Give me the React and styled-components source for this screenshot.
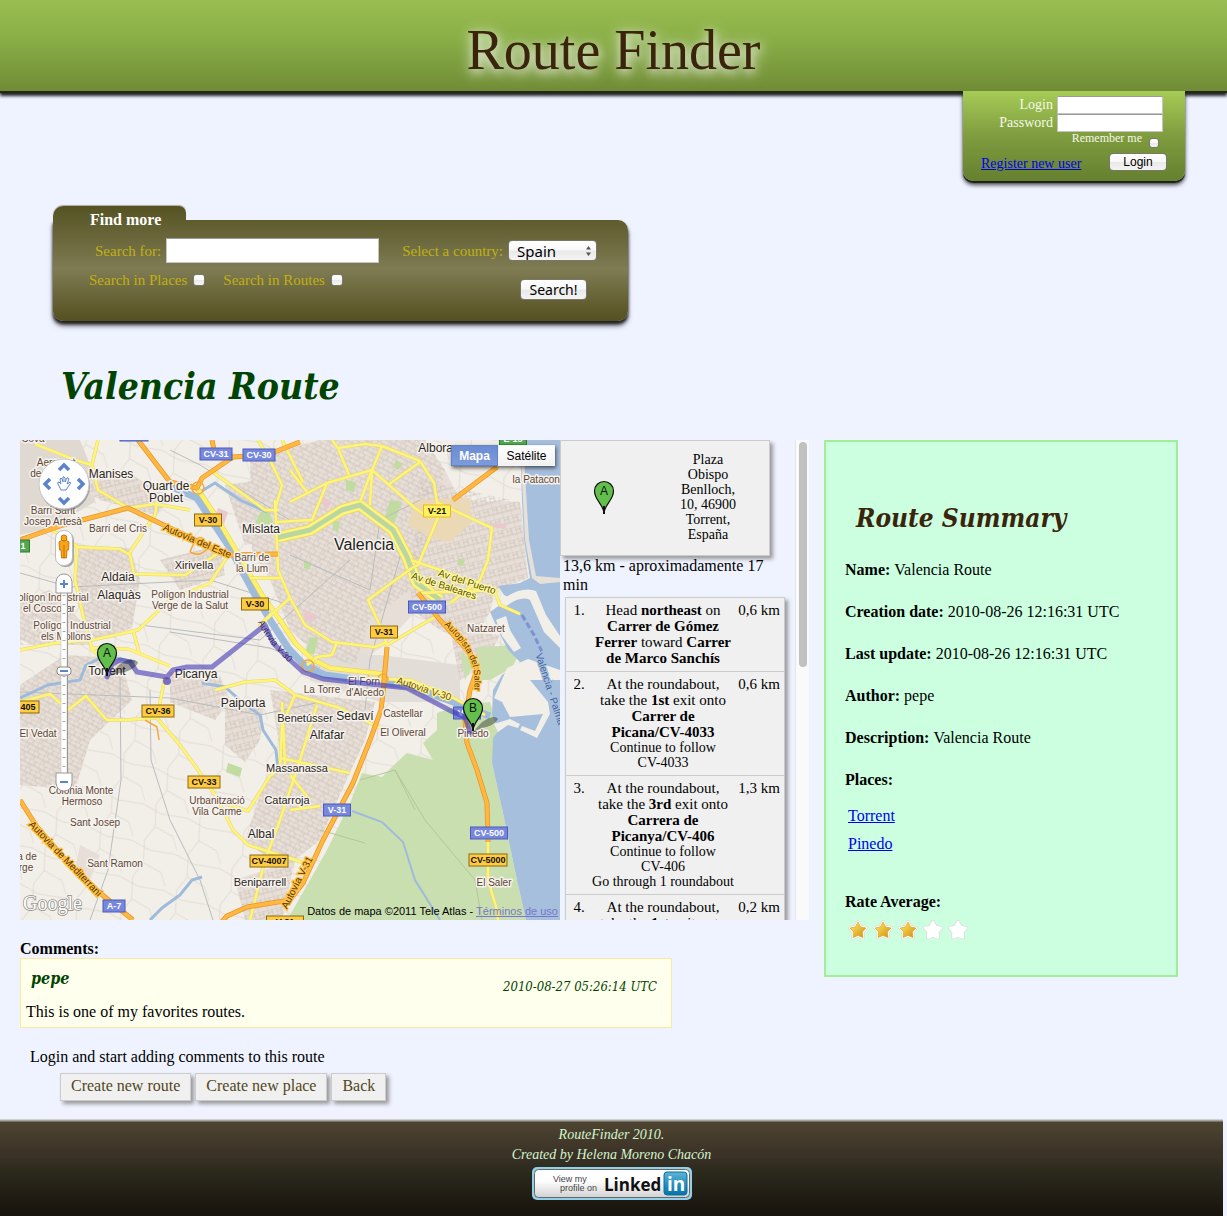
import React, { useId } from "react";
import styled, { createGlobalStyle, css } from "styled-components";

const serif = `"Liberation Serif", "Times New Roman", serif`;
const display = `"DejaVu Serif Condensed", "DejaVu Serif", Georgia, serif`;
const sans = `"Liberation Sans", Arial, sans-serif`;
const ui = `"Noto Sans", "Open Sans", sans-serif`;

const GlobalStyle = createGlobalStyle`
  *, *::before, *::after { box-sizing: border-box; }
  body {
    margin: 0;
    background: #eff3ff;
    color: #000;
    font: 16px/18px ${serif};
  }
  h1, h2, h3, h4, p, ul, ol, dl, dd { margin: 0; padding: 0; }
  ul, ol { list-style: none; }
  a { color: #0000ee; }
`;

/* ---------- header ---------- */

const Header = styled.header`
  height: 91px;
  padding-top: 18px;
  text-align: center;
  background: linear-gradient(#99bd50, #8bb047 40%, #6f8c35);
  box-shadow: 0 2px 1px #22271c, 0 5px 3px rgba(0, 0, 0, 0.85);
`;

const SiteTitle = styled.h1`
  font-size: 56px;
  font-weight: normal;
  line-height: 64px;
  color: #3a250c;
  text-shadow: 1px 3px 8px rgba(255, 255, 255, 0.6), 1px 3px 16px rgba(255, 255, 255, 0.9);
`;

const glossy = css`
  border: 1px solid #77776a;
  border-radius: 4px;
  background: linear-gradient(#fff, #f8f8f8 49%, #e9e9e9 51%, #f4f4f4);
  color: #000;
`;

const TickBox = styled.input`
  appearance: none;
  ${glossy}
  width: ${(p) => p.$size}px;
  height: ${(p) => p.$size}px;
  margin: 0;
  border-radius: 3px;
  &:checked { background: #5b86d8; }
`;

const TextBox = styled.input`
  width: ${(p) => p.$width}px;
  height: ${(p) => p.$height}px;
  margin: 0;
  padding: 1px 4px;
  border: 1px solid #c4c4c4;
  border-top-color: #999;
  border-radius: 0;
  background: #fff;
  font: 14px ${ui};
`;

const PushButton = styled.button`
  ${glossy}
  width: ${(p) => p.$width}px;
  height: ${(p) => p.$height}px;
  padding: 0;
  font: ${(p) => p.$font};
`;

const LoginBar = styled.div`
  display: flex;
  justify-content: flex-end;
  padding-right: 42px;
  position: relative;
`;

const LoginPanel = styled.form`
  width: 222px;
  height: 90px;
  padding: 5px 18px 0;
  border-radius: 0 0 10px 10px;
  background: linear-gradient(#a6cb56, #7f9c3f 50%, #65802f);
  box-shadow: 0 2px 1px #1c2114, 0 4px 4px rgba(0, 0, 0, 0.7);
  color: #f4f8e8;
  font-size: 14px;
`;

const LoginRow = styled.div`
  display: flex;
  justify-content: flex-end;
  align-items: center;
  gap: 4px;
  padding-right: 4px;
`;

const RememberRow = styled.div`
  display: flex;
  justify-content: flex-end;
  align-items: flex-end;
  gap: 7px;
  height: 16px;
  padding-right: 8px;
  font-size: 12px;
  label { align-self: flex-start; line-height: 12px; }
`;

const LoginActions = styled.div`
  display: flex;
  justify-content: space-between;
  align-items: flex-start;
  margin-top: 5px;
  a { line-height: 22px; }
`;

/* ---------- search ---------- */

const SearchForm = styled.form`
  max-width: 575px;
  margin: 25px 20px 0 53px;
`;

const olive = `linear-gradient(#555222, #7f7b53 55%, #545020)`;

const SearchTab = styled.h2`
  width: 133px;
  height: 14px;
  padding-left: 37px;
  border-radius: 10px 7px 0 0;
  background: ${olive} 0 0 / 100% 115px no-repeat;
  box-shadow: 0 -1px 1px #aaa;
  color: #fff;
  font-size: 16px;
  line-height: 28px;
`;

const SearchPanel = styled.div`
  padding: 18px 31px 21px 36px;
  border-radius: 0 10px 10px 10px;
  background: ${olive} 0 -14px / 100% 115px no-repeat;
  box-shadow: 0 3px 3px #222, 0 5px 5px rgba(0, 0, 0, 0.5);
  color: #c1b011;
  font-size: 15px;
`;

const SearchRow = styled.div`
  display: flex;
  align-items: center;
  gap: 5px;
  padding-left: 6px;
`;

const CountryLabel = styled.label`
  margin-left: auto;
`;

const SelectShell = styled.span`
  position: relative;
  display: block;
  svg { position: absolute; right: 5px; top: 5px; pointer-events: none; }
`;

const Select = styled.select`
  appearance: none;
  ${glossy}
  display: block;
  width: 89px;
  height: 21px;
  padding: 0 8px;
  font: 15px/18px ${ui};
`;

const OptionsRow = styled.div`
  display: flex;
  align-items: flex-start;
  gap: 18px;
  margin-top: 8px;
  padding-right: 10px;
  button { margin: 8px 0 0 auto; }
`;

const Option = styled.label`
  display: flex;
  align-items: center;
  gap: 6px;
`;

/* ---------- main ---------- */

const RouteTitle = styled.h2`
  margin: 44px 20px 33px 61px;
  font: italic bold 37px/42px ${display};
  color: #004400;
`;

const Main = styled.main`
  display: flex;
  align-items: flex-start;
  gap: 15px;
  padding: 0 49px 21px 20px;
`;

const Column = styled.div`
  flex: 1;
  min-width: 0;
`;

const RouteView = styled.section`
  display: flex;
  height: 480px;
`;

const MapFrame = styled.div`
  position: relative;
  flex: 1;
  min-width: 0;
  overflow: hidden;
  font-family: ${sans};
`;

const MapArt = styled.svg`
  display: block;
  width: 100%;
  height: 480px;
  font-family: ${sans};
`;

const MapTypes = styled.div`
  position: absolute;
  top: 5px;
  right: 5px;
  display: flex;
  box-shadow: 1px 2px 4px rgba(0, 0, 0, 0.6);
`;

const MapType = styled.button`
  width: ${(p) => (p.$on ? 47 : 57)}px;
  height: 21px;
  padding: 0;
  border: 1px solid ${(p) => (p.$on ? "#6283cc" : "#f4f4f4")};
  background: ${(p) => (p.$on ? "linear-gradient(#6a8cd2, #7e9bdb)" : "linear-gradient(#fff, #f1f1f1)")};
  color: ${(p) => (p.$on ? "#fff" : "#000")};
  font: ${(p) => (p.$on ? "bold" : "normal")} 12px ${sans};
`;

const MapCredit = styled.p`
  position: absolute;
  right: 2px;
  bottom: 1px;
  font-size: 11px;
  line-height: 16px;
  a { color: #7777cc; }
`;

const Directions = styled.div`
  flex: 0 0 235px;
  overflow: hidden;
`;

const ScrollTrack = styled.div`
  flex: 0 0 14px;
  padding: 2px 2px 0 3px;
  border-left: 1px solid #e6e6e6;
  background: #fafafa;
`;

const ScrollThumb = styled.div`
  height: 225px;
  border-radius: 4px;
  background: #c1c1c1;
`;

const raised = css`
  border: 1px solid #cbcbcb;
  background: #f0f0f0;
  box-shadow: 3px 3px 4px #999;
`;

const Address = styled.div`
  ${raised}
  display: flex;
  align-items: center;
  width: 210px;
  height: 116px;
  padding: 0 30px 2px 32px;
  justify-content: space-between;
  font-size: 14px;
  line-height: 15px;
  text-align: center;
  p { width: 62px; }
`;

const Distance = styled.p`
  width: 220px;
  padding-left: 3px;
  line-height: 19px;
`;

const Steps = styled.table`
  ${raised}
  width: 220px;
  margin: 3px 0 0 5px;
  border-collapse: separate;
  border-spacing: 0;
  table-layout: fixed;
  font-size: 15px;
  line-height: 16px;
  td {
    padding: 4px 0 5px;
    border-bottom: 1px solid #cbcbcb;
    vertical-align: top;
    text-align: center;
  }
  td:first-child { width: 26px; }
  td:last-child { width: 50px; }
`;

const StepText = styled.div`
  padding: 0 2px;
`;

const StepNote = styled.div`
  font-size: 14px;
  line-height: 15px;
`;

const Whole = styled.span`
  white-space: nowrap;
`;

/* ---------- comments ---------- */

const CommentsTitle = styled.h3`
  margin-top: 20px;
  font-size: 16px;
`;

const Comment = styled.article`
  max-width: 652px;
  border: 1px solid #fbe9a0;
  background: #ffffee;
  padding: 0 14px 6px 5px;
`;

const CommentHead = styled.div`
  display: flex;
  justify-content: space-between;
  align-items: flex-end;
  height: 38px;
  margin-bottom: 6px;
  padding-left: 5px;
  color: #004400;
`;

const Author = styled.h4`
  margin-bottom: 8px;
  font: italic bold 16px/20px ${display};
`;

const Stamp = styled.time`
  font: italic 13px/20px ${display};
`;

const Hint = styled.p`
  margin-top: 20px;
  padding-left: 10px;
`;

const Actions = styled.nav`
  display: flex;
  gap: 4px;
  margin: 7px 0 0 40px;
`;

const Action = styled.a`
  ${raised}
  height: 28px;
  padding: 3px 10px;
  color: #514721;
  text-decoration: none;
`;

/* ---------- summary ---------- */

const Summary = styled.aside`
  flex: 0 0 354px;
  height: 537px;
  padding: 60px 19px 0;
  border: 2px solid #a0ee98;
  background: #ccffe0;
`;

const SummaryTitle = styled.h3`
  margin: 0 0 27px 11px;
  font: italic bold 26px/32px ${display};
  color: #3a250c;
`;

const Facts = styled.dl`
  display: grid;
  gap: 24px;
  div { display: flex; gap: 4px; }
  dt { font-weight: bold; }
`;

const Places = styled.ul`
  margin: 13px 0 35px;
  padding-left: 3px;
  line-height: 28px;
`;

const Stars = styled.div`
  display: flex;
  gap: 5px;
  padding: 9px 3px 0;
`;

/* ---------- footer ---------- */

const Footer = styled.footer`
  height: 94px;
  margin-right: 4px;
  padding-top: 3px;
  background: linear-gradient(#4d4431, #393026 38%, #2c291d 52%, #17130d);
  box-shadow: 0 -1px 0 #77746a, 0 -2px 0 #a5a39c, 0 -3px 0 #d0d0cf;
  color: #d5f5ce;
  text-align: center;
  font: italic 14px/20px ${serif};
`;

const Badge = styled.a`
  display: inline-block;
  margin-top: 2px;
  svg { display: block; }
`;

/* ---------- map data ---------- */

const streets = {
  yellow: [
    "M15,4 L55,20 L72,25 L78,50 L108,68 L135,64 L170,70",
    "M72,25 L78,0",
    "M0,210 L35,203 L72,200 L118,190 L150,160 L190,143 L207,117",
    "M57,107 L100,109 L110,115 L114,134 L165,135 L200,112",
    "M57,107 L55,140 L63,175 L72,210 L87,222",
    "M32,90 L58,107",
    "M72,208 L108,209 L150,226",
    "M113,190 L119,212",
    "M108,115 L135,75 L137,62",
    "M145,237 L137,278 L105,280 L87,280 L78,270 L66,256 L48,270",
    "M137,278 L160,305 L178,330 L200,362 L228,371 L250,336 L265,325 L262,262",
    "M200,364 L213,390 L228,405 L275,420",
    "M195,250 L225,242 L255,240 L275,255 L320,268 L360,288",
    "M0,262 L30,254 L48,270",
    "M312,0 L318,8 L345,4 L362,6 L400,21 L414,43 L419,75 L398,125 L392,128",
    "M270,62 L307,43 L352,30 L395,68 L409,78",
    "M318,8 L329,35 M362,6 L352,30 L340,62 M352,30 L350,65",
    "M368,45 L400,22",
    "M270,30 L287,52 M262,0 L283,42",
    "M307,43 L292,80 L255,82",
    "M416,62 L472,88 L468,120 L460,140 L430,163",
    "M392,128 L348,160 L362,190 L367,205 L415,177",
    "M391,120 L420,130 L475,152 L480,165 L500,174",
    "M399,153 L478,150",
    "M270,158 L285,185 L312,202 L355,207 L367,202",
    "M255,60 L258,130 L270,158 L240,185 L252,173",
    "M258,70 L245,70 L190,30",
    "M238,0 L250,20 L262,45 L255,70",
    "M230,138 L260,138",
    "M287,225 L297,217 L312,215 L317,202",
    "M275,255 L262,285 L260,330",
    "M297,265 L280,320 L260,380 L245,420 L230,480",
    "M260,318 L330,333",
    "M270,418 L292,426",
    "M468,400 L468,440 L477,470 L478,480",
    "M270,370 L300,366",
    "M270,335 L282,350 L290,360",
    "M340,238 L390,240 L430,256 L465,275",
  ],
  orange: [
    "M0,100 L43,85 L108,68 L150,88 L207,115 L258,114",
    "M118,0 L150,42 L177,48 L182,38 L213,17 L247,15 L280,2",
    "M192,0 L194,10",
    "M0,360 L17,387 L43,417 L80,453 L113,480",
    "M367,207 L363,253 L361,270 L350,300 L333,343 L303,400 L283,443 L270,460 L227,467 L207,476 L200,484",
    "M398,153 L420,180 L450,213 L457,230 L450,250 L445,280 L447,303 L457,330 L467,363 L468,402",
    "M477,27 L433,60",
  ],
};

const canal = "M150,46 L177,58 L190,78 L210,108 L235,155 L252,183 L268,208 L285,226 L305,235 L363,243 L390,246 L417,256 L470,276";
const turia = "M255,98 L290,90 L322,70 L340,65 L353,75 L373,90 L387,117 L397,143 L420,160";
const route = "M87,237 L92,224 L100,220 L110,222 L117,232 L147,237 L153,230 L167,227 L192,227 L245,185 L253,203 L270,220 L283,232 L303,239 L350,244 L387,248 L433,272 L445,277 L450,292";

const towns = [
  ["Manises", 91, 38], ["Quart de", 146, 50], ["Poblet", 146, 62], ["Mislata", 241, 93],
  ["Xirivella", 174, 129], ["Aldaia", 98, 141], ["Alaquàs", 99, 159], ["Torrent", 87, 235],
  ["Picanya", 176, 238], ["Paiporta", 223, 267], ["Benetússer", 285, 282], ["Sedaví", 335, 280],
  ["Alfafar", 307, 299], ["Massanassa", 277, 332], ["Catarroja", 267, 364], ["Albal", 241, 398],
  ["Beniparrell", 240, 446], ["Alboraya", 422, 12],
];

const suburbs = [
  ["Cova", 13, 2], ["Aeroport", 36, 26], ["de València", 36, 37], ["Barri Sant", 33, 74], ["Josep Artesà", 33, 85],
  ["Barri del Cris", 98, 92], ["Barri de", 232, 121], ["la Llum", 232, 132],
  ["Polígon Industrial", 170, 158], ["Verge de la Salut", 170, 169], ["Polígon Industrial", 30, 161], ["el Coscollar", 29, 172],
  ["Polígon Industrial", 52, 189], ["els Mollons", 46, 200], ["la Patacona", 519, 43], ["Natzaret", 466, 192],
  ["La Torre", 302, 253], ["El Forn", 344, 245], ["d'Alcedo", 345, 256], ["Castellar", 383, 277],
  ["El Oliveral", 383, 296], ["El Vedat", 18, 297], ["Colonia Monte", 61, 354], ["Hermoso", 62, 365],
  ["Sant Josep", 75, 386], ["Sant Ramon", 95, 427], ["Urbanització", 197, 364], ["Vila Carme", 197, 375],
  ["Pinedo", 453, 297], ["El Saler", 474, 446], ["a de", 7, 420], ["rge", 6, 431],
];

const roadNames = [
  ["Autovía del Este", 176, 104, 23, "#5b3400", "#ffc345"],
  ["Autovia de Mediterrani", 43, 421, 46, "#5b3400", "#ffc345"],
  ["Autovía V-31", 280, 444, -63, "#5b3400", "#ffc345"],
  ["Autovia V-30", 403, 252, 18, "#6a5300", "#fff39a"],
  ["Av del Puerto", 446, 145, 18, "#5b5500", "#fff8a0"],
  ["Av de Baleares", 423, 149, 18, "#5b5500", "#fff8a0"],
  ["Valencia - Palma", 527, 250, 72, "#47649f", "#a5bfdd"],
];

const shieldColors = {
  blue: ["#7687dd", "#4b5cb8", "#fff"],
  amber: ["#ffcb40", "#8a6a10", "#111"],
  yellow: ["#fff25c", "#f0b820", "#111"],
  green: ["#52a852", "#2d7a2d", "#fff"],
};

const shields = [
  ["V-30", 114, -5, 28, "blue"], ["CV-31", 196, 14, 32, "blue"], ["CV-30", 239, 15, 32, "blue"],
  ["V-30", 188, 80, 27, "amber"], ["V-30", 235, 164, 27, "amber"], ["V-21", 417, 71, 27, "yellow"],
  ["CV-500", 407, 167, 37, "blue"], ["V-31", 364, 192, 27, "amber"], ["CV-36", 138, 271, 32, "amber"],
  ["405", 8, 267, 22, "amber"], ["CV-33", 184, 342, 32, "amber"], ["CV-4007", 249, 421, 38, "amber"],
  ["V-31", 317, 370, 27, "blue"], ["CV-500", 469, 393, 37, "blue"], ["CV-5000", 468, 420, 38, "amber"],
  ["A-7", 94, 466, 22, "blue"], ["V-15", 447, 273, 27, "blue"], ["E-15", 493, -1, 27, "green"],
  ["1", 3, 106, 13, "green"], ["V-31", 265, 482, 37, "amber"],
];

function Pin({ letter }) {
  return (
    <g>
      <path d="M0,0 C-1,-9 -9.500,-13 -9.500,-22 A9.500,9.500 0 1 1 9.500,-22 C9.500,-13 1,-9 0,0 Z" fill="#63bf4c" stroke="#111" strokeWidth="1.200" />
      <path d="M0,1 L0,-7" stroke="#111" strokeWidth="2" />
      <text y="-18" textAnchor="middle" fontSize="12" fill="#111">{letter}</text>
    </g>
  );
}

function ValenciaMap() {
  return (
    <MapArt viewBox="0 0 540 480" preserveAspectRatio="xMidYMid slice" role="img" aria-label="Valencia Route">
      <defs>
        <pattern id="blocks" width="11" height="9" patternUnits="userSpaceOnUse" patternTransform="rotate(27)">
          <path d="M0,0 H11 M0,0 V9 M6,0 V5 M0,5 H11 M3,5 V9" stroke="#c8bcb3" strokeWidth="0.700" fill="none" />
        </pattern>
        <pattern id="blocksSteep" width="9" height="12" patternUnits="userSpaceOnUse" patternTransform="rotate(-14)">
          <path d="M0,0 H9 M0,0 V12 M5,0 V7 M0,7 H9 M0,3 H5" stroke="#c8bcb3" strokeWidth="0.700" fill="none" />
        </pattern>
        <pattern id="lanes" width="46" height="38" patternUnits="userSpaceOnUse" patternTransform="rotate(18)">
          <path d="M0,4 L20,8 L46,4 M12,0 L18,22 L12,38 M18,22 L38,26 L46,38" stroke="#ddd8cf" strokeWidth="0.800" fill="none" />
        </pattern>
        <path id="saler" d="M424,185 Q450,208 454,232 Q456,250 450,285" />
        <path id="v30" d="M238,182 Q250,208 284,236" />
      </defs>

      <rect width="540" height="480" fill="#f2efe9" />
      <rect width="540" height="480" fill="url(#lanes)" />

      <g fill="#e7dfd7">
        <path d="M0,0 L60,0 L72,30 L75,62 L30,88 L0,95 Z" fill="#e0d9d2" />
        <path d="M230,18 L300,0 L405,0 L425,30 L440,60 L500,62 L508,138 L475,150 L470,172 L450,205 L420,190 L395,172 L365,205 L335,225 L296,214 L270,190 L250,140 L232,110 Z" />
        <path d="M55,105 L110,108 L120,140 L112,188 L75,200 L58,165 Z" />
        <path d="M55,45 L105,30 L150,60 L135,75 L80,60 Z M140,120 L200,105 L205,135 L160,150 Z" />
        <path d="M0,245 L45,215 L100,218 L112,260 L70,300 L55,350 L0,345 Z" />
        <path d="M150,232 L200,236 L210,260 L195,280 L150,262 Z M205,262 L245,258 L240,300 L225,322 L205,305 Z" />
        <path d="M250,250 L355,262 L345,300 L322,350 L300,400 L262,430 L225,400 L245,340 L262,320 Z" />
        <path d="M215,440 L275,420 L262,480 L225,480 Z M60,405 L80,415 L70,440 L55,430 Z M430,190 L480,195 L465,225 L440,240 Z" />
        <path d="M290,215 L360,215 L440,225 L440,262 L360,262 L290,240 Z" fill="#e2ddd6" />
        <path d="M0,160 L30,150 L60,180 L70,205 L20,205 L0,200 Z M205,45 L240,40 L255,100 L225,105 Z" />
      </g>
      <path fill="url(#blocks)" d="M230,18 L300,0 L405,0 L425,30 L415,80 L390,150 L350,180 L335,225 L296,214 L270,190 L250,140 L232,110 Z M55,105 L110,108 L120,140 L112,188 L75,200 L58,165 Z M0,245 L45,215 L100,218 L112,260 L70,300 L55,350 L0,345 Z M250,250 L355,262 L345,300 L322,350 L300,400 L262,430 L225,400 L245,340 L262,320 Z M0,160 L30,150 L60,180 L70,205 L0,205 Z M205,45 L240,40 L255,100 L225,105 Z" />
      <path fill="url(#blocksSteep)" d="M400,40 L500,62 L508,138 L475,150 L470,172 L450,205 L420,190 L395,172 L390,150 Z M55,45 L105,30 L150,60 L135,75 L80,60 Z M140,120 L200,105 L205,135 L160,150 Z M150,232 L200,236 L210,260 L195,280 L150,262 Z M205,262 L245,258 L240,300 L225,322 L205,305 Z M215,440 L275,420 L262,480 L225,480 Z M430,190 L480,195 L465,225 L440,240 Z" />
      <path d="M395,60 L450,58 L452,82 L430,102 L412,98 L388,85 Z" fill="#ead9b4" />
      <g fill="#e9c9cd">
        <path d="M198,68 L208,72 L204,84 L196,78 Z M300,55 L312,62 L305,72 Z M286,170 L297,175 L292,183 L283,178 Z M473,83 L486,84 L485,89 L472,87 Z" />
      </g>

      <path d="M403,303 L413,320 L387,313 L377,322 L362,337 L342,333 L330,363 L307,410 L290,440 L270,475 L270,480 H506 L497,440 L483,373 L472,323 L478,290 L470,262 L440,265 L417,273 L417,290 Z" fill="#cadfb0" />
      <path d="M457,207 L503,205 L492,228 L470,240 L458,240 Z M440,212 L455,222 L445,240 Z" fill="#cadfb0" />
      <g fill="#c1dca0">
        <path d="M245,66 L250,74 L255,88 L243,88 L235,82 Z M326,40 L336,42 L334,52 L326,50 Z M370,60 L382,62 L374,84 L364,80 Z M313,80 L320,82 L318,92 L313,90 Z M284,120 L292,124 L289,130 L284,128 Z M290,197 L298,198 L294,215 L285,213 Z M438,118 L445,120 L443,126 L437,125 Z M376,20 L383,24 L378,30 L373,27 Z M208,323 L222,328 L220,337 L206,332 Z" />
      </g>

      <path d="M500,0 L540,0 V480 H506 L497,440 L483,373 L472,323 L473,298 L479,290 L472,275 L473,250 L482,235 L500,222 L488,210 L478,190 L470,172 L480,165 L495,160 L484,155 L478,146 L500,143 L510,138 L504,100 L502,60 Z" fill="#a5bfdd" />
      <path d="M490,0 L500,0 L505,100 L512,138 L520,144 L540,142 V138 L516,136 L509,100 L503,0 Z" fill="#e6e0d8" />
      <g fill="#f2efe9">
        <path d="M478,163 Q500,145 516,151 L526,175 L540,196 V208 L524,192 L510,160 Q500,155 484,168 Z" />
        <path d="M476,180 L486,176 L490,190 L501,208 L494,212 L482,196 Z" />
        <path d="M487,228 L508,219 L540,230 V240 L510,240 L528,262 L530,274 L517,298 L500,290 L502,286 L515,291 L523,274 L490,277 L482,262 L474,258 Z" />
        <path d="M474,284 L490,279 L500,284 L498,288 L488,285 L478,292 Z" />
      </g>
      <path d="M502,175 L514,195 L522,212" stroke="#7d92cf" strokeWidth="3" strokeDasharray="6 3" fill="none" />

      <g fill="none" stroke="#b9bcbd" strokeWidth="1">
        <path d="M100,235 L101,340 L88,430 L70,480 M130,250 L131,320 L150,380 L180,440 L193,480" />
        <path d="M0,133 L50,147 L190,140 L270,165 M150,192 L250,208 L300,228 M120,185 L240,200 L330,120 M345,270 L350,220 L385,100" />
        <path d="M150,10 L180,25 L270,80 M270,115 L350,150 L360,80 L400,60 M0,252 L150,258 L240,275 L300,262" />
        <path d="M340,340 L375,330 L405,380 L420,398 L455,440 L462,480 M300,390 L345,403 M375,330 L395,370" stroke="#b5c59b" />
      </g>

      <g fill="none" stroke="#9ebbdc">
        <path d="M180,52 L195,43 L220,60 L247,72" strokeWidth="3" />
        <path d="M0,258 L28,245 L60,240 L66,225 L85,216 L115,222 M182,243 L205,247 L222,262 L240,275 L243,290 L256,310 L258,330" strokeWidth="3" />
        <path d="M332,371 L362,382 L383,402 L395,440 L420,480" strokeWidth="2" />
        <path d="M130,480 L142,468 L160,455 L172,440 L182,437" strokeWidth="3" />
        <path d={canal} strokeWidth="7" />
      </g>

      <g fill="none" strokeLinejoin="round">
        <path d={turia} stroke="#e9d968" strokeWidth="12" />
        <path d={turia} stroke="#fff57d" strokeWidth="10" />
        <path d={turia} stroke="#bcd6a0" strokeWidth="5" />
        <path d="M177,48 L197,78 L217,112 L242,155 L260,180 L276,204 L292,219 L310,228 L363,234" stroke="#e5cf5a" strokeWidth="5" />
        <path d="M177,48 L197,78 L217,112 L242,155 L260,180 L276,204 L292,219 L310,228 L363,234" stroke="#fff26b" strokeWidth="4" />
        {streets.yellow.map((d) => <path key={d} d={d} stroke="#e6d771" strokeWidth="3.500" />)}
        {streets.yellow.map((d) => <path key={d} d={d} stroke="#fff47a" strokeWidth="2.500" />)}
        {streets.orange.map((d) => <path key={d} d={d} stroke="#e9942a" strokeWidth="5" />)}
        {streets.orange.map((d) => <path key={d} d={d} stroke="#ffb83f" strokeWidth="3.500" />)}
        <g stroke="#f4a93a" strokeWidth="1.500">
          <circle cx="288" cy="226" r="6" /><circle cx="178" cy="48" r="6" /><circle cx="363" cy="239" r="5" />
          <path d="M170,112 Q180,85 188,108 Q180,118 170,112 M125,280 L137,287 L139,300" />
        </g>
      </g>

      <g textAnchor="middle" stroke="#f6f3ee" strokeWidth="3" strokeLinejoin="round" paintOrder="stroke">
        {suburbs.map(([name, x, y]) => <text key={name + y} x={x} y={y} fontSize="10" fill="#5e4636">{name}</text>)}
        {towns.map(([name, x, y]) => <text key={name} x={x} y={y} fontSize={name.length > 8 ? 11 : 12} fill="#2b2522">{name}</text>)}
        <text x="344" y="110" fontSize="16" fill="#222">Valencia</text>
      </g>
      <g textAnchor="middle" fontSize="10" strokeWidth="2.500" paintOrder="stroke">
        {roadNames.map(([name, x, y, turn, ink, halo]) => (
          <text key={name + x} transform={`translate(${x},${y}) rotate(${turn})`} fill={ink} stroke={halo}>{name}</text>
        ))}
      </g>
      <text fontSize="9" fill="#5b3400" stroke="#ffc345" strokeWidth="2.500" paintOrder="stroke">
        <textPath href="#saler">Autopista del Saler</textPath>
      </text>

      <g textAnchor="middle" fontSize="9" fontWeight="bold">
        {shields.map(([name, x, y, w, tone]) => (
          <g key={name + x} transform={`translate(${x},${y})`}>
            <rect x={-w / 2} y="-6" width={w} height="12" fill={shieldColors[tone][0]} stroke={shieldColors[tone][1]} />
            <text y="3" fill={shieldColors[tone][2]}>{name}</text>
          </g>
        ))}
      </g>

      <path d={route} fill="none" stroke="#3c32b4" strokeOpacity="0.580" strokeWidth="5" strokeLinejoin="round" strokeLinecap="round" />
      <text fontSize="9" fill="#2c2a66"><textPath href="#v30">Autovia V-30</textPath></text>
      <circle cx="147" cy="241" r="4" fill="#5a50b8" fillOpacity="0.800" />

      <g fill="#000" fillOpacity="0.350">
        <path d="M87,237 L100,224 Q112,216 118,222 Q116,230 100,233 Z M453,292 L462,282 Q475,274 478,279 Q474,286 462,288 Z" />
      </g>
      <g transform="translate(87,235)"><Pin letter="A" /></g>
      <g transform="translate(453,290)"><Pin letter="B" /></g>

      <g>
        <circle cx="45" cy="46" r="25" fill="#888" fillOpacity="0.700" />
        <circle cx="44" cy="44" r="25" fill="#fff" stroke="#c8c8c8" />
        <g fill="none" stroke="#5c84cc" strokeWidth="3.500">
          <path d="M39,30 L44,25 L49,30 M39,58 L44,63 L49,58 M30,39 L25,44 L30,49 M58,39 L63,44 L58,49" />
          <path strokeWidth="1" strokeLinejoin="round" fill="#fff" d="M41,50 L38,44 Q37,42 39,42 L41,44 L40,39 Q41,37 42,39 L43,42 L43,37 Q44,36 45,38 L45,42 L47,38 Q48,37 49,39 L47,44 L50,42 Q51,43 50,44 L46,50 Z" />
        </g>
        <rect x="37" y="92" width="17" height="35" rx="8" fill="#777" fillOpacity="0.600" />
        <rect x="35.500" y="90.500" width="17" height="35" rx="8" fill="#fff" stroke="#bbb" />
        <g fill="#f7a416" stroke="#bb6500" strokeWidth="0.800">
          <path d="M39,102 Q44,98 49,102 L48.500,110 L47,110 L46.500,118 L41.500,118 L41,110 L39.500,110 Z M44,105 V118" />
          <circle cx="44" cy="98" r="3" />
        </g>
        <rect x="42" y="150" width="6" height="185" fill="#888" />
        <rect x="41" y="150" width="6" height="185" fill="#fff" stroke="#bbb" strokeWidth="0.500" />
        <path d="M44,155 V332" stroke="#aaa" strokeWidth="3" strokeDasharray="1 8" />
        <path d="M36,153 V142 Q37,134 44,134 Q51,134 52,142 V153 Z" fill="#fff" stroke="#999" />
        <path d="M36,333 V343 Q37,351 44,351 Q51,351 52,343 V333 Z" fill="#fff" stroke="#999" />
        <rect x="37" y="227" width="14" height="8" rx="3" fill="#fff" stroke="#888" />
        <path d="M40,144 H48 M44,140 V148 M40,342 H48 M40,231 H48" stroke="#5c84cc" strokeWidth="2" />
      </g>
      <text x="3" y="470" fontFamily="Liberation Serif" fontSize="20" fill="#fff" stroke="#8b8b84" strokeWidth="1.500" paintOrder="stroke">Google</text>
    </MapArt>
  );
}

/* ---------- content ---------- */

const B = ({ children }) => <strong>{children}</strong>;

const steps = [
  { text: <>Head <B>northeast</B> on <B>Carrer de Gómez Ferrer</B> toward <B>Carrer de Marco Sanchís</B></>, km: "0,6 km" },
  { text: <>At the roundabout, take the <B>1st</B> exit onto <B>Carrer de <Whole>Picana/CV-4033</Whole></B></>, notes: [<>Continue to follow <Whole>CV-4033</Whole></>], km: "0,6 km" },
  { text: <>At the roundabout, take the <B>3rd</B> exit onto <B>Carrera de <Whole>Picanya/CV-406</Whole></B></>, notes: [<>Continue to follow <Whole>CV-406</Whole></>, "Go through 1 roundabout"], km: "1,3 km" },
  { text: <>At the roundabout, take the <B>1st</B> exit onto <B>Carrer de Picanya</B></>, km: "0,2 km" },
];

const facts = [
  ["Name:", "Valencia Route"],
  ["Creation date:", "2010-08-26 12:16:31 UTC"],
  ["Last update:", "2010-08-26 12:16:31 UTC"],
  ["Author:", "pepe"],
  ["Description:", "Valencia Route"],
  ["Places:", ""],
];

function Star({ on }) {
  const gold = useId();
  const d = "M10,2 L12.600,7 L18,8 L14.300,12 L15,17.500 L10,15.500 L5,17.500 L5.700,12 L2,8 L7.400,7 Z";
  return (
    <svg width="20" height="20" viewBox="0 0 20 20" aria-hidden="true">
      <linearGradient id={gold} x2="1" y2="1">
        <stop offset="0.200" stopColor="#f6dc55" />
        <stop offset="1" stopColor="#d08a10" />
      </linearGradient>
      <path d={d} fill="#fff" stroke="#dcdcdc" strokeWidth="4" strokeLinejoin="round" />
      <path d={d} fill="#fff" stroke="#fff" strokeWidth="2.500" strokeLinejoin="round" />
      {on && <path d={d} fill={`url(#${gold})`} stroke="#d9a520" strokeWidth="0.700" />}
    </svg>
  );
}

function LinkedInBadge() {
  return (
    <svg width="160" height="33" viewBox="0 0 160 33" role="img" aria-label="View my profile on LinkedIn">
      <defs>
        <linearGradient id="plate" x2="0" y2="1"><stop offset="0.400" stopColor="#fff" /><stop offset="1" stopColor="#d2d2d4" /></linearGradient>
        <linearGradient id="tile" x2="0" y2="1"><stop offset="0" stopColor="#5fb4d6" /><stop offset="0.500" stopColor="#2a90bf" /><stop offset="1" stopColor="#0674a9" /></linearGradient>
      </defs>
      <rect width="160" height="33" rx="5" fill="#8fd0ea" />
      <rect x="2.500" y="2.500" width="155" height="28" rx="4" fill="url(#plate)" stroke="#666" />
      <g fontFamily="Liberation Sans" fontStyle="normal" fontSize="9" fill="#444">
        <text x="21" y="15">View my</text>
        <text x="28" y="24">profile on</text>
      </g>
      <g fontFamily="Open Sans" fontStyle="normal" fontWeight="bold">
        <text x="72" y="24" fontSize="17" fill="#111">Linked</text>
        <rect x="132" y="5" width="23" height="23" rx="3" fill="url(#tile)" stroke="#0b6fa0" />
        <text x="135" y="24" fontSize="19" fill="#fff">in</text>
      </g>
    </svg>
  );
}

export default function App() {
  return (
    <>
      <GlobalStyle />
      <Header><SiteTitle>Route Finder</SiteTitle></Header>

      <LoginBar>
        <LoginPanel>
          <LoginRow>
            <label htmlFor="login">Login</label>
            <TextBox id="login" $width={106} $height={18} />
          </LoginRow>
          <LoginRow>
            <label htmlFor="password">Password</label>
            <TextBox id="password" type="password" $width={106} $height={18} />
          </LoginRow>
          <RememberRow>
            <label htmlFor="remember">Remember me</label>
            <TickBox id="remember" type="checkbox" $size={10} />
          </RememberRow>
          <LoginActions>
            <a href="#register">Register new user</a>
            <PushButton type="button" $width={58} $height={18} $font={`12px ${sans}`}>Login</PushButton>
          </LoginActions>
        </LoginPanel>
      </LoginBar>

      <SearchForm>
        <SearchTab>Find more</SearchTab>
        <SearchPanel>
          <SearchRow>
            <label htmlFor="query">Search for:</label>
            <TextBox id="query" $width={213} $height={25} />
            <CountryLabel htmlFor="country">Select a country:</CountryLabel>
            <SelectShell>
              <Select id="country" defaultValue="Spain"><option>Spain</option></Select>
              <svg width="7" height="12" viewBox="0 0 7 12" aria-hidden="true"><path d="M1,4.500 L3.500,1 L6,4.500 Z M1,7.500 L3.500,11 L6,7.500 Z" fill="#555" /></svg>
            </SelectShell>
          </SearchRow>
          <OptionsRow>
            <Option>Search in Places <TickBox type="checkbox" $size={12} /></Option>
            <Option>Search in Routes <TickBox type="checkbox" $size={12} /></Option>
            <PushButton type="button" $width={67} $height={21} $font={`14px/18px ${ui}`}>Search!</PushButton>
          </OptionsRow>
        </SearchPanel>
      </SearchForm>

      <RouteTitle>Valencia Route</RouteTitle>

      <Main>
        <Column>
          <RouteView>
            <MapFrame>
              <ValenciaMap />
              <MapTypes>
                <MapType type="button" $on>Mapa</MapType>
                <MapType type="button">Satélite</MapType>
              </MapTypes>
              <MapCredit>Datos de mapa ©2011 Tele Atlas - <a href="#terms">Términos de uso</a></MapCredit>
            </MapFrame>
            <Directions>
              <Address>
                <svg width="22" height="36" viewBox="-11 -34 22 36" aria-hidden="true" fontFamily="Liberation Sans"><Pin letter="A" /></svg>
                <p>Plaza Obispo Benlloch, 10, 46900 Torrent, España</p>
              </Address>
              <Distance>13,6 km - aproximadamente 17 min</Distance>
              <Steps>
                <tbody>
                  {steps.map((step, i) => (
                    <tr key={i}>
                      <td>{i + 1}.</td>
                      <td>
                        <StepText>{step.text}</StepText>
                        {step.notes?.map((note, n) => <StepNote key={n}>{note}</StepNote>)}
                      </td>
                      <td>{step.km}</td>
                    </tr>
                  ))}
                </tbody>
              </Steps>
            </Directions>
            <ScrollTrack><ScrollThumb /></ScrollTrack>
          </RouteView>

          <CommentsTitle>Comments:</CommentsTitle>
          <Comment>
            <CommentHead>
              <Author>pepe</Author>
              <Stamp>2010-08-27 05:26:14 UTC</Stamp>
            </CommentHead>
            <p>This is one of my favorites routes.</p>
          </Comment>
          <Hint>Login and start adding comments to this route</Hint>
          <Actions>
            <Action href="#new-route">Create new route</Action>
            <Action href="#new-place">Create new place</Action>
            <Action href="#back">Back</Action>
          </Actions>
        </Column>

        <Summary>
          <SummaryTitle>Route Summary</SummaryTitle>
          <Facts>
            {facts.map(([term, value]) => <div key={term}><dt>{term}</dt><dd>{value}</dd></div>)}
          </Facts>
          <Places>
            <li><a href="#torrent">Torrent</a></li>
            <li><a href="#pinedo">Pinedo</a></li>
          </Places>
          <strong>Rate Average:</strong>
          <Stars role="img" aria-label="3 of 5">
            {[1, 2, 3, 4, 5].map((n) => <Star key={n} on={n <= 3} />)}
          </Stars>
        </Summary>
      </Main>

      <Footer>
        <p>RouteFinder 2010.</p>
        <p>Created by Helena Moreno Chacón</p>
        <Badge href="#linkedin"><LinkedInBadge /></Badge>
      </Footer>
    </>
  );
}
